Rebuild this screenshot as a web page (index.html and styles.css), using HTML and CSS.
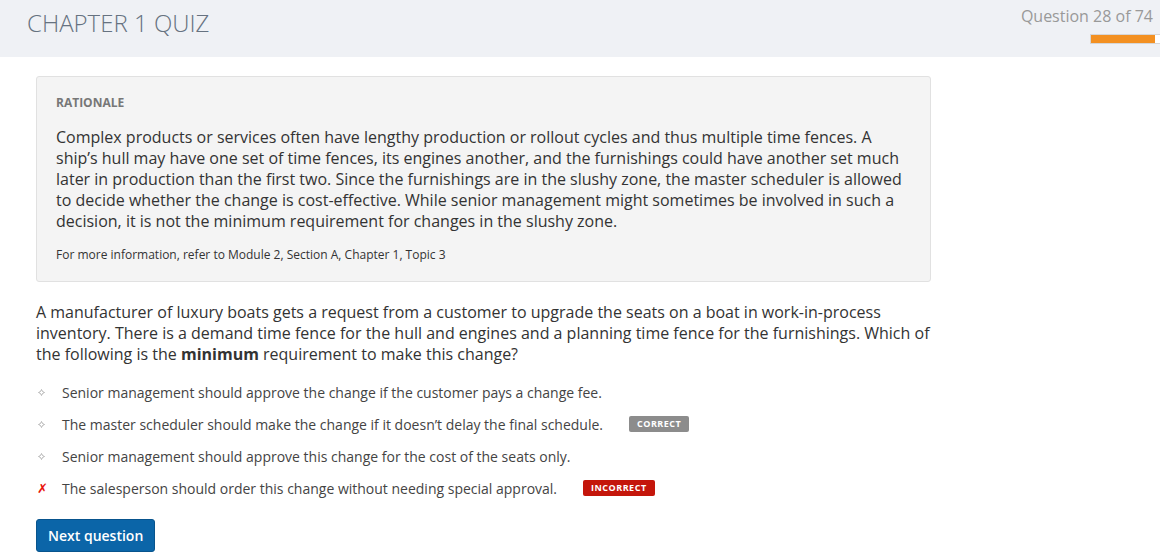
FILE: index.html
```html
<!DOCTYPE html>
<html>
<head>
<meta charset="utf-8">
<link rel="stylesheet" href="styles.css">
</head>
<body>
<header class="topbar">
  <h1 class="title">CHAPTER 1 QUIZ</h1>
  <div class="progress">
    <div class="progress-label">Question 28 of 74</div>
    <div class="progress-track"><div class="progress-fill" style="width:93%"></div></div>
  </div>
</header>
<main class="content">
  <section class="rationale">
    <h2 class="rationale-head">RATIONALE</h2>
    <p class="rationale-text">Complex products or services often have lengthy production or rollout cycles and thus multiple time fences. A ship’s hull may have one set of time fences, its engines another, and the furnishings could have another set much later in production than the first two. Since the furnishings are in the slushy zone, the master scheduler is allowed to decide whether the change is cost-effective. While senior management might sometimes be involved in such a decision, it is not the minimum requirement for changes in the slushy zone.</p>
    <p class="rationale-ref">For more information, refer to Module 2, Section A, Chapter 1, Topic 3</p>
  </section>
  <p class="question">A manufacturer of luxury boats gets a request from a customer to upgrade the seats on a boat in work-in-process inventory. There is a demand time fence for the hull and engines and a planning time fence for the furnishings. Which of the following is the <strong>minimum</strong> requirement to make this change?</p>
  <ul class="options">
    <li class="option"><span class="mark"><svg width="7" height="7" viewBox="0 0 7 7"><path d="M3.5 0.5 L4.5 2.5 L6.5 3.5 L4.5 4.5 L3.5 6.5 L2.5 4.5 L0.5 3.5 L2.5 2.5 Z" fill="none" stroke="#b5b5b5" stroke-width="1"/></svg></span><span class="opt-text">Senior management should approve the change if the customer pays a change fee.</span></li>
    <li class="option"><span class="mark"><svg width="7" height="7" viewBox="0 0 7 7"><path d="M3.5 0.5 L4.5 2.5 L6.5 3.5 L4.5 4.5 L3.5 6.5 L2.5 4.5 L0.5 3.5 L2.5 2.5 Z" fill="none" stroke="#b5b5b5" stroke-width="1"/></svg></span><span class="opt-text">The master scheduler should make the change if it doesn’t delay the final schedule.</span><span class="badge badge-correct">CORRECT</span></li>
    <li class="option"><span class="mark"><svg width="7" height="7" viewBox="0 0 7 7"><path d="M3.5 0.5 L4.5 2.5 L6.5 3.5 L4.5 4.5 L3.5 6.5 L2.5 4.5 L0.5 3.5 L2.5 2.5 Z" fill="none" stroke="#b5b5b5" stroke-width="1"/></svg></span><span class="opt-text">Senior management should approve this change for the cost of the seats only.</span></li>
    <li class="option"><span class="mark mark-x">✗</span><span class="opt-text">The salesperson should order this change without needing special approval.</span><span class="badge badge-incorrect">INCORRECT</span></li>
  </ul>
  <button class="next-btn">Next question</button>
</main>
</body>
</html>
```

FILE: styles.css
```css
html, body {
  margin: 0;
  padding: 0;
  background: #ffffff;
  font-family: "Open Sans", "Liberation Sans", sans-serif;
  color: #333;
}
.topbar {
  height: 57px;
  background: #eff1f5;
  display: flex;
  justify-content: space-between;
  align-items: flex-start;
}
.title {
  margin: 0;
  padding: 7px 0 0 27px;
  font-size: 24px;
  font-weight: 300;
  color: #667280;
  line-height: 32px;
}
.progress {
  display: flex;
  flex-direction: column;
  align-items: flex-end;
  padding-top: 5px;
}
.progress-label {
  font-size: 16px;
  color: #999;
  line-height: 22px;
  padding-right: 7px;
}
.progress-track {
  margin-top: 7px;
  width: 69px;
  height: 8px;
  background: #fff;
  border: 1px solid #d6d6d6;
  border-right: none;
}
.progress-fill {
  height: 100%;
  background: #f39021;
}
.content {
  padding: 19px 0 0 36px;
  width: 895px;
}
.rationale {
  background: #f4f4f4;
  border: 1px solid #e1e1e1;
  border-radius: 3px;
  padding: 18px 20px 18px 19px;
}
.rationale-head {
  margin: 0;
  font-size: 12px;
  font-weight: 700;
  color: #777;
  line-height: 16px;
}
.rationale-text {
  margin: 16px 0 0 0;
  font-size: 16px;
  line-height: 21px;
  color: #333;
}
.rationale-ref {
  margin: 15px 0 0 0;
  font-size: 12px;
  line-height: 16px;
  color: #333;
}
.question {
  margin: 20px 0 0 0;
  font-size: 16px;
  line-height: 21px;
  color: #333;
}
.question strong {
  font-weight: 700;
}
.options {
  list-style: none;
  margin: 11px 0 0 0;
  padding: 0;
}
.option {
  display: flex;
  align-items: center;
  height: 32px;
  font-size: 14px;
  color: #444;
}
.mark {
  width: 26px;
  flex: none;
  display: flex;
  align-items: center;
  padding-left: 2px;
  box-sizing: border-box;
}
.mark-x {
  color: #e8140b;
  font-size: 13px;
  font-weight: 700;
  font-style: italic;
  padding-left: 1px;
  font-family: "DejaVu Sans", sans-serif;
}
.badge {
  display: inline-block;
  margin-left: 26px;
  padding: 0 8px;
  height: 16px;
  line-height: 16px;
  font-size: 9px;
  font-weight: 700;
  letter-spacing: 0.5px;
  color: #fff;
  border-radius: 2px;
}
.badge-correct {
  background: #8c8c8c;
}
.badge-incorrect {
  background: #c4160b;
}
.next-btn {
  margin-top: 15px;
  height: 33px;
  padding: 0 11px;
  background: #0b65a8;
  border: 1px solid #08548d;
  border-radius: 3px;
  color: #fff;
  font-family: "Open Sans", "Liberation Sans", sans-serif;
  font-size: 14px;
  font-weight: 600;
}
```
